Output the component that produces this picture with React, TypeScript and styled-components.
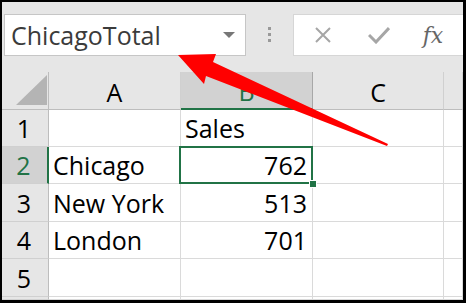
import React from "react";
import styled, { createGlobalStyle } from "styled-components";

const GREEN = "#217346";

const GlobalStyle = createGlobalStyle`
  html, body {
    margin: 0;
    padding: 0;
    background: #000;
  }
`;

const Frame = styled.div`
  position: relative;
  width: 466px;
  height: 303px;
  box-sizing: border-box;
  padding: 2px 3px 3px 2px;
  background: #000;
  overflow: hidden;
`;

const Screen = styled.div`
  width: 100%;
  height: 100%;
  display: flex;
  flex-direction: column;
  background: #e6e6e6;
  overflow: hidden;
`;

const FormulaBar = styled.div`
  display: flex;
  align-items: center;
  height: 70px;
  padding: 0 0 4px 2px;
  box-sizing: border-box;
`;

const NameBox = styled.div`
  width: 242px;
  height: 42px;
  box-sizing: border-box;
  display: flex;
  align-items: center;
  justify-content: space-between;
  padding: 0 10px 0 6px;
  background: #fff;
  border: 1px solid #c6c6c6;
  font-family: "Open Sans", sans-serif;
  font-size: 25px;
  color: #3b3b3b;
`;

const Caret = styled.span`
  width: 0;
  height: 0;
  border-left: 6px solid transparent;
  border-right: 6px solid transparent;
  border-top: 6px solid #777;
`;

const Grip = styled.div`
  width: 47px;
  display: flex;
  justify-content: center;
`;

const InputBox = styled.div`
  flex: 1;
  height: 42px;
  box-sizing: border-box;
  display: flex;
  align-items: center;
  background: #fff;
  border: 1px solid #d6d6d6;
  border-right: none;
`;

const BarButton = styled.span<{ $w: number }>`
  width: ${(p) => p.$w}px;
  display: flex;
  justify-content: center;
  align-items: center;
  color: #a6a6a6;
`;

const Fx = styled.span`
  font-family: "DejaVu Serif", "Liberation Serif", serif;
  font-style: italic;
  font-size: 22px;
  color: #666;
`;

const Sheet = styled.div`
  flex: 1;
  display: grid;
  grid-template-columns: 47px 132px 132px 131px 1fr;
  grid-template-rows: 38px 37px 37px 38px 37px 38px 1fr;
  background: #fff;
  font-family: "Open Sans", sans-serif;
  font-size: 25px;
  color: #000;
`;

const Corner = styled.div`
  position: relative;
  background: #e6e6e6;
  border-right: 1px solid #bdbdbd;
  border-bottom: 1px solid #bdbdbd;
`;

const ColHead = styled.div<{ $sel?: boolean }>`
  display: flex;
  align-items: center;
  justify-content: center;
  background: ${(p) => (p.$sel ? "#d2d2d2" : "#e6e6e6")};
  border-right: 1px solid ${(p) => (p.$sel ? "#a8a8a8" : "#d0d0d0")};
  border-bottom: ${(p) => (p.$sel ? `2px solid ${GREEN}` : "1px solid #bdbdbd")};
  color: ${(p) => (p.$sel ? GREEN : "#000")};
  padding-top: 2px;
`;

const RowHead = styled.div<{ $sel?: boolean }>`
  display: flex;
  align-items: center;
  justify-content: center;
  background: ${(p) => (p.$sel ? "#d2d2d2" : "#e6e6e6")};
  border-right: ${(p) => (p.$sel ? `2px solid ${GREEN}` : "1px solid #bdbdbd")};
  border-bottom: 1px solid #d0d0d0;
  color: ${(p) => (p.$sel ? GREEN : "#000")};
  padding-right: 2px;
`;

const Cell = styled.div<{ $num?: boolean; $sel?: boolean }>`
  position: relative;
  display: flex;
  align-items: center;
  justify-content: ${(p) => (p.$num ? "flex-end" : "flex-start")};
  padding: 0 5px 0 4px;
  border-right: 1px solid #dadada;
  border-bottom: 1px solid #dadada;
  white-space: nowrap;

  ${(p) =>
    p.$sel &&
    `
    &::after {
      content: "";
      position: absolute;
      top: -1px;
      left: -2px;
      right: -1px;
      bottom: -1px;
      border: 2px solid ${GREEN};
    }
  `}
`;

const FillHandle = styled.span`
  position: absolute;
  right: -5px;
  bottom: -5px;
  width: 6px;
  height: 6px;
  background: ${GREEN};
  border: 1px solid #fff;
  z-index: 2;
`;

const Arrow = styled.svg`
  position: absolute;
  left: 0;
  top: 0;
  pointer-events: none;
`;

const cols = ["A", "B", "C", ""];
const rows: [string, string][] = [
  ["", "Sales"],
  ["Chicago", "762"],
  ["New York", "513"],
  ["London", "701"],
  ["", ""],
  ["", ""],
];

export default function App() {
  return (
    <>
      <GlobalStyle />
      <Frame>
        <Screen>
          <FormulaBar>
            <NameBox>
              ChicagoTotal
              <Caret />
            </NameBox>
            <Grip>
              <svg width="4" height="16" viewBox="0 0 4 16">
                <rect x="0" y="0" width="3" height="3" fill="#999" />
                <rect x="0" y="6" width="3" height="3" fill="#999" />
                <rect x="0" y="12" width="3" height="3" fill="#999" />
              </svg>
            </Grip>
            <InputBox>
              <BarButton $w={58}>
                <svg width="18" height="18" viewBox="0 0 18 18">
                  <path d="M2 2 L16 16 M16 2 L2 16" stroke="#a6a6a6" strokeWidth="2" fill="none" />
                </svg>
              </BarButton>
              <BarButton $w={54}>
                <svg width="22" height="18" viewBox="0 0 22 18">
                  <path d="M1 9 L8 16 L21 2" stroke="#a6a6a6" strokeWidth="3" fill="none" />
                </svg>
              </BarButton>
              <BarButton $w={54}>
                <Fx>fx</Fx>
              </BarButton>
            </InputBox>
          </FormulaBar>
          <Sheet>
            <Corner>
              <svg width="46" height="37" style={{ position: "absolute", left: 0, top: 0 }}>
                <polygon points="14,33 45,33 45,3" fill="#b4b4b4" />
              </svg>
            </Corner>
            {cols.map((c, i) => (
              <ColHead key={i} $sel={c === "B"}>
                {c}
              </ColHead>
            ))}
            {rows.map((r, i) => (
              <React.Fragment key={i}>
                <RowHead $sel={i === 1}>{i < 5 ? i + 1 : ""}</RowHead>
                <Cell>{r[0]}</Cell>
                <Cell $num={i > 0} $sel={i === 1}>
                  {r[1]}
                  {i === 1 && <FillHandle />}
                </Cell>
                <Cell />
                <Cell />
              </React.Fragment>
            ))}
          </Sheet>
        </Screen>
        <Arrow width="466" height="303" viewBox="0 0 466 303">
          <polygon
            points="178,55 216,54 213,62 388,144 387,146 206,76 204,84"
            fill="#ff0000"
          />
        </Arrow>
      </Frame>
    </>
  );
}
